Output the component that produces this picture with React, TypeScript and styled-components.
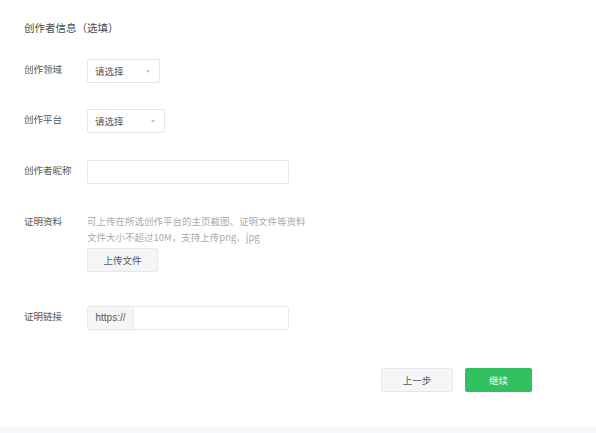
import React from "react";
import styled, { createGlobalStyle } from "styled-components";

const GlobalStyle = createGlobalStyle`
  html, body {
    margin: 0;
    padding: 0;
    background: #f4f8fc;
    font-family: "Noto Sans CJK SC", "Noto Sans", sans-serif;
  }
`;

const Page = styled.div`
  background: #ffffff;
  height: 427px;
  padding: 20px 0 0 24px;
  box-sizing: border-box;
  width: 596px;
`;

const Title = styled.div`
  font-size: 10.5px;
  line-height: 16px;
  color: #4a4a4a;
`;

const Row = styled.div<{ $top: number }>`
  display: flex;
  align-items: flex-start;
  margin-top: ${(p) => p.$top}px;
`;

const Label = styled.div`
  width: 63px;
  flex-shrink: 0;
  font-size: 9.5px;
  line-height: 20px;
  color: #585858;
`;

const Select = styled.div<{ $width: number }>`
  position: relative;
  width: ${(p) => p.$width}px;
  height: 24px;
  box-sizing: border-box;
  border: 1px solid #e6e6e6;
  border-radius: 2px;
  padding-left: 7px;
  font-size: 9.5px;
  line-height: 22px;
  color: #555;

  &::after {
    content: "";
    position: absolute;
    right: 9px;
    top: 10px;
    border-left: 2.5px solid transparent;
    border-right: 2.5px solid transparent;
    border-top: 3px solid #c4c4c4;
  }
`;

const Input = styled.div`
  width: 202px;
  height: 24px;
  box-sizing: border-box;
  border: 1px solid #e6e6e6;
  border-radius: 2px;
`;

const InputGroup = styled.div`
  display: flex;
  width: 202px;
  height: 24px;
  box-sizing: border-box;
  border: 1px solid #e8e8e8;
  border-radius: 2px;
  overflow: hidden;
`;

const Addon = styled.div`
  width: 45px;
  background: #f5f6f8;
  border-right: 1px solid #e8e8e8;
  font-family: "Liberation Sans", "Noto Sans CJK SC", sans-serif;
  font-size: 10px;
  line-height: 22px;
  color: #555;
  text-align: center;
`;

const Content = styled.div`
  display: flex;
  flex-direction: column;
  align-items: flex-start;
`;

const Hint = styled.div`
  padding-top: 2px;
  font-size: 9.5px;
  line-height: 16px;
  color: #ababab;
`;

const Button = styled.button<{ $width: number; $primary?: boolean }>`
  width: ${(p) => p.$width}px;
  height: 24px;
  box-sizing: border-box;
  border: 1px solid ${(p) => (p.$primary ? "#2fc05f" : "#e6e7ea")};
  background: ${(p) => (p.$primary ? "#31c15f" : "#f5f6f8")};
  color: ${(p) => (p.$primary ? "#eafbef" : "#555")};
  border-radius: 2px;
  font-family: "Noto Sans CJK SC", sans-serif;
  font-size: 9.5px;
  padding: 0;
  cursor: pointer;
`;

const UploadButton = styled(Button)`
  margin-top: 3px;
`;

const Footer = styled.div`
  display: flex;
  justify-content: flex-end;
  gap: 12px;
  margin-top: 38px;
  padding-right: 64px;
`;

export default function App() {
  return (
    <>
      <GlobalStyle />
      <Page>
        <Title>创作者信息（选填）</Title>
        <Row $top={23}>
          <Label>创作领域</Label>
          <Select $width={73}>请选择</Select>
        </Row>
        <Row $top={26}>
          <Label>创作平台</Label>
          <Select $width={78}>请选择</Select>
        </Row>
        <Row $top={27}>
          <Label>创作者昵称</Label>
          <Input />
        </Row>
        <Row $top={27}>
          <Label>证明资料</Label>
          <Content>
            <Hint>
              可上传在所选创作平台的主页截图、证明文件等资料
              <br />
              文件大小不超过10M，支持上传png、jpg
            </Hint>
            <UploadButton $width={71}>上传文件</UploadButton>
          </Content>
        </Row>
        <Row $top={34}>
          <Label>证明链接</Label>
          <InputGroup>
            <Addon>https://</Addon>
          </InputGroup>
        </Row>
        <Footer>
          <Button $width={72}>上一步</Button>
          <Button $width={67} $primary>
            继续
          </Button>
        </Footer>
      </Page>
    </>
  );
}
